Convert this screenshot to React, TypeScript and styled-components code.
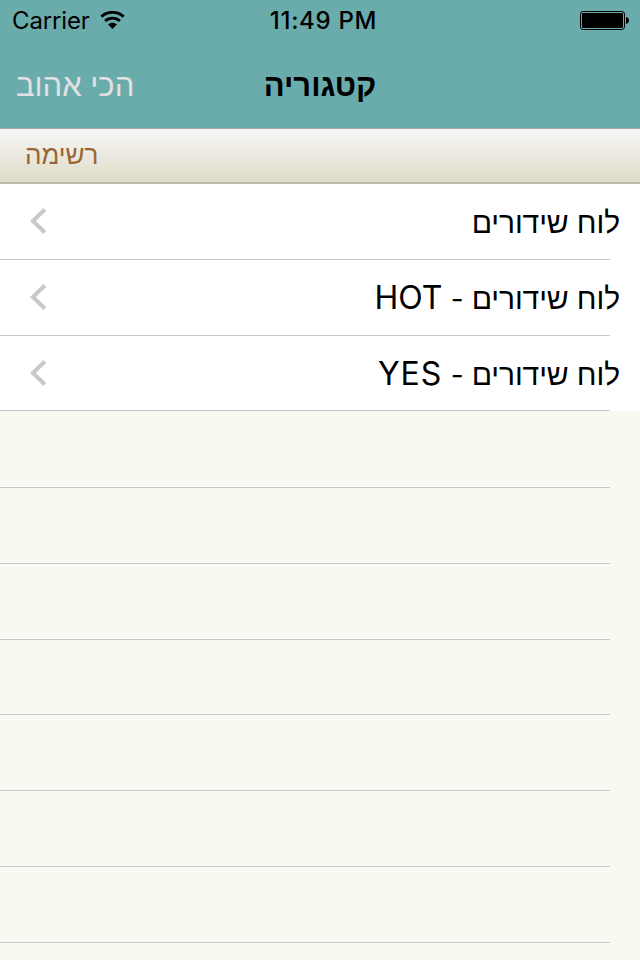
import React from "react";
import styled, { createGlobalStyle } from "styled-components";

const Global = createGlobalStyle`
  body { margin: 0; background: #faf9f1; }
  * { box-sizing: border-box; }
`;

const Screen = styled.div`
  width: 640px;
  height: 960px;
  overflow: hidden;
  display: flex;
  flex-direction: column;
  background: #faf9f1;
  font-family: "Liberation Sans", sans-serif;
  color: #000;
`;

const Top = styled.header`
  flex: none;
  height: 128px;
  background: #6aabab;
`;

const StatusBar = styled.div`
  height: 40px;
  display: grid;
  grid-template-columns: 1fr auto 1fr;
  align-items: center;
  padding: 0 11px 0 12px;
  font-family: Inter, sans-serif;
  font-size: 24px;
  line-height: 41px;
  svg { display: block; }
`;

const Carrier = styled.div`
  display: flex;
  align-items: center;
  gap: 10px;
  letter-spacing: -0.15px;
`;

const Clock = styled.div`
  font-weight: 500;
  padding-left: 6px;
  letter-spacing: 0.7px;
`;

const Power = styled.div`
  display: flex;
  justify-content: flex-end;
`;

const NavBar = styled.nav`
  height: 88px;
  display: grid;
  grid-template-columns: 1fr auto 1fr;
  align-items: center;
  padding: 4px 16px 0;
  line-height: 40px;
`;

const NavLink = styled.span`
  direction: rtl;
  justify-self: start;
  color: #e1e1e1;
  font-size: 31px;
`;

const Title = styled.h1`
  direction: rtl;
  margin: 0;
  font-size: 31px;
  font-weight: 700;
`;

const SectionHeader = styled.h2`
  flex: none;
  direction: rtl;
  margin: 0;
  height: 56px;
  padding: 0 25px;
  border-top: 1px solid #aaa6a7;
  border-bottom: 2px solid #bcbaaa;
  background: linear-gradient(#f6f6f6, #e0dcc8);
  color: #996633;
  font-size: 26px;
  font-weight: 400;
  line-height: 53px;
  text-align: left;
`;

const Row = styled.div<{ $height: number; $filled?: boolean }>`
  flex: none;
  height: ${(p) => p.$height}px;
  display: flex;
  flex-direction: column;
  justify-content: flex-end;
  background: ${(p) => (p.$filled ? "#fff" : "transparent")};
  &::after {
    content: "";
    flex: none;
    width: 610px;
    height: 1px;
    background: #c8c7cc;
  }
`;

const RowBody = styled.div`
  flex: 1;
  display: flex;
  align-items: center;
  justify-content: space-between;
  padding: 0 20px 1px 30px;
`;

const Label = styled.span`
  direction: rtl;
  padding-top: 4px;
  font-size: 30px;
  line-height: 40px;
  letter-spacing: -0.1px;
`;

const Dash = styled.span`
  font-family: Inter, sans-serif;
  font-size: 28px;
  line-height: 30px;
`;

const Latin = styled.span<{ $tracking: number }>`
  font-family: Inter, sans-serif;
  font-size: 32px;
  line-height: 30px;
  letter-spacing: ${(p) => p.$tracking}px;
`;

const Wifi = () => (
  <svg width="25" height="19" viewBox="0 0 26 19">
    <path d="M1.400 5.400C8-.4 18-.4 24.600 5.400" fill="none" stroke="#000" strokeWidth="3" />
    <path d="M5.300 10c4.400-4 11-4 15.400 0" fill="none" stroke="#000" strokeWidth="3" />
    <path d="M8.400 13.600c2.600-2.300 6.600-2.300 9.200 0L13 18.300z" />
  </svg>
);

const Battery = () => (
  <svg width="49" height="19" viewBox="0 0 49 19">
    <rect x="0.5" y="0.5" width="44" height="18" rx="2.6" fill="none" stroke="#000" />
    <rect x="2" y="2" width="41" height="15" rx="1.2" />
    <path d="M46 6c1.8.4 3 1.700 3 3.500s-1.200 3.100-3 3.500z" />
  </svg>
);

const Chevron = () => (
  <svg width="18" height="28" viewBox="0 0 18 28">
    <path d="M14.800 2.500 2.900 14l11.900 11.500" fill="none" stroke="#c7c7cc" strokeWidth="4" />
  </svg>
);

const channels = [
  { height: 76, latin: "", tracking: 0 },
  { height: 76, latin: "HOT", tracking: 0 },
  { height: 75, latin: "YES", tracking: 1 },
];
const emptyRows = [77, 76, 76, 75, 76, 76, 76];

export default function App() {
  return (
    <Screen>
      <Global />
      <Top>
        <StatusBar>
          <Carrier>Carrier<Wifi /></Carrier>
          <Clock>11:49 PM</Clock>
          <Power><Battery /></Power>
        </StatusBar>
        <NavBar>
          <NavLink>הכי אהוב</NavLink>
          <Title>קטגוריה</Title>
        </NavBar>
      </Top>
      <SectionHeader>רשימה</SectionHeader>
      <main>
        {channels.map((c) => (
          <Row key={c.latin} $height={c.height} $filled>
            <RowBody>
              <Chevron />
              <Label>
                לוח שידורים
                {c.latin && <> <Dash>-</Dash> <Latin $tracking={c.tracking}>{c.latin}</Latin></>}
              </Label>
            </RowBody>
          </Row>
        ))}
        {emptyRows.map((height, i) => <Row key={i} $height={height} />)}
      </main>
    </Screen>
  );
}
